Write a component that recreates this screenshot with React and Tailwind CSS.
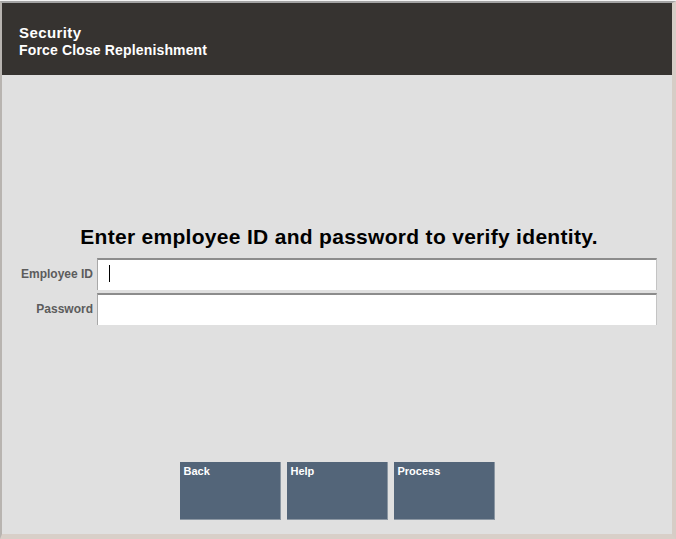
import React from "react";

const font = { fontFamily: '"Liberation Sans", Arial, sans-serif' };

function Field({ label, cursor }) {
  return (
    <div className="flex items-center h-[32px]">
      <div className="w-[95px] pr-[4px] text-right text-[12px] font-bold text-[#5c5c5c]">{label}</div>
      <div className="relative w-[560px] h-[32px] bg-white border-t-2 border-t-[#8c8c8c] border-l border-l-[#a8a8a8] border-r border-r-[#c4c4c4]">
        {cursor && <div className="absolute left-[11px] top-[5px] w-px h-[17px] bg-black" />}
      </div>
    </div>
  );
}

function Btn({ children }) {
  return (
    <div className="w-[101px] h-[58px] bg-[#536579] border-r border-r-[#8a96a2] border-b border-b-[#8c97a3] px-[4px] pt-[2px] text-[11px] font-bold text-white leading-[14px]">
      {children}
    </div>
  );
}

export default function App() {
  return (
    <div style={font} className="w-[676px] h-[539px] flex flex-col bg-[#d8cfc8]">
      <div className="h-px bg-[#f4f4f4]" />
      <div className="flex-1 flex flex-col border-t-2 border-t-[#a4a4a4] border-l-2 border-l-[#b8b4b0] border-r-4 border-r-[#d6cdc6] border-b-[5px] border-b-[#d8cfc8]">
        <div className="h-[72px] bg-[#363330] pl-[17px] pt-[21px] text-white">
          <div className="text-[15px] font-bold leading-[17px] tracking-[0.4px]">Security</div>
          <div className="mt-px text-[14px] font-bold leading-[17px] tracking-[0.15px]">Force Close Replenishment</div>
        </div>
        <div className="flex-1 bg-[#e0e0e0] flex flex-col">
          <div className="pt-[150px] pl-[4px] text-center text-[21px] font-bold leading-[24px] tracking-[0.3px] text-black">
            Enter employee ID and password to verify identity.
          </div>
          <div className="mt-[9px] flex flex-col gap-[3px]">
            <Field label="Employee ID" cursor />
            <Field label="Password" />
          </div>
          <div className="mt-[137px] flex justify-center gap-[6px]">
            <Btn>Back</Btn>
            <Btn>Help</Btn>
            <Btn>Process</Btn>
          </div>
        </div>
      </div>
    </div>
  );
}
